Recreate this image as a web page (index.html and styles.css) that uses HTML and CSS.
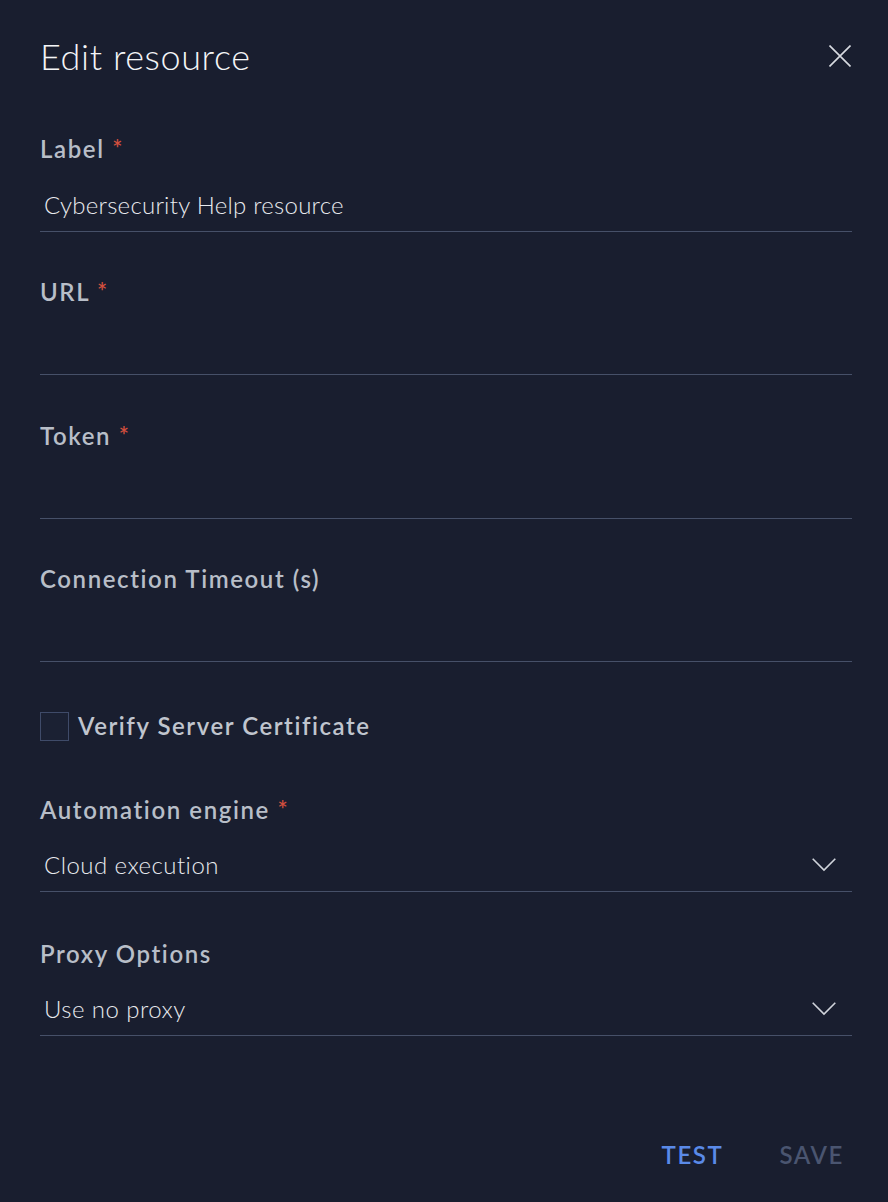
FILE: index.html
```html
<!DOCTYPE html>
<html lang="en">
<head>
<meta charset="utf-8">
<title>Edit resource</title>
<link rel="stylesheet" href="styles.css">
</head>
<body>
<div class="dialog">
  <header class="dialog-header">
    <h1 class="dialog-title">Edit resource</h1>
    <button class="close-btn" aria-label="Close">
      <svg width="22" height="22" viewBox="0 0 22 22"><path d="M0.5 0.5 L21.5 21.5 M21.5 0.5 L0.5 21.5" stroke="#d8dbe1" stroke-width="1.6" fill="none"/></svg>
    </button>
  </header>

  <form class="form">
    <div class="field">
      <div class="field-label">Label <span class="req">*</span></div>
      <div class="field-input">Cybersecurity Help resource</div>
    </div>
    <div class="field">
      <div class="field-label">URL <span class="req">*</span></div>
      <div class="field-input"></div>
    </div>
    <div class="field">
      <div class="field-label">Token <span class="req">*</span></div>
      <div class="field-input"></div>
    </div>
    <div class="field">
      <div class="field-label">Connection Timeout (s)</div>
      <div class="field-input"></div>
    </div>

    <label class="checkbox-row">
      <span class="checkbox"></span>
      <span class="checkbox-text">Verify Server Certificate</span>
    </label>

    <div class="field field-select">
      <div class="field-label">Automation engine <span class="req">*</span></div>
      <div class="field-input select">
        <span>Cloud execution</span>
        <svg class="chevron" width="24" height="14" viewBox="0 0 24 14"><path d="M0.7 0.7 L12 12 L23.3 0.7" stroke="#d0d4db" stroke-width="1.6" fill="none"/></svg>
      </div>
    </div>
    <div class="field field-select">
      <div class="field-label">Proxy Options</div>
      <div class="field-input select">
        <span>Use no proxy</span>
        <svg class="chevron" width="24" height="14" viewBox="0 0 24 14"><path d="M0.7 0.7 L12 12 L23.3 0.7" stroke="#d0d4db" stroke-width="1.6" fill="none"/></svg>
      </div>
    </div>
  </form>

  <footer class="dialog-footer">
    <button class="btn btn-test">TEST</button>
    <button class="btn btn-save">SAVE</button>
  </footer>
</div>
</body>
</html>
```

FILE: styles.css
```css
* { box-sizing: border-box; }

html, body {
  margin: 0;
  padding: 0;
  background: #191e2f;
}

body {
  font-family: Lato, "Liberation Sans", sans-serif;
  color: #e6e8ec;
}

.dialog {
  width: 888px;
  min-height: 1202px;
  padding: 36px 36px 0 40px;
}

.dialog-header {
  display: flex;
  justify-content: space-between;
  align-items: center;
  height: 40px;
}

.dialog-title {
  margin: 0;
  font-size: 36px;
  line-height: 40px;
  font-weight: 300;
  color: #f4f5f7;
  letter-spacing: 0.6px;
}

.close-btn {
  background: none;
  border: 0;
  padding: 0;
  width: 22px;
  height: 22px;
  margin-right: 1px;
  display: flex;
}

.form {
  display: flex;
  flex-direction: column;
  margin-top: 58px;
}

.field + .field {
  margin-top: 45.4px;
}

.field-label {
  font-size: 24px;
  line-height: 30px;
  font-weight: 600;
  color: #b8bec8;
  letter-spacing: 1.6px;
}

.req {
  color: #d24f3e;
  margin-left: 0;
  letter-spacing: 0;
}

.field-input {
  height: 68px;
  padding: 26px 0 11px 4px;
  font-size: 24px;
  line-height: 30px;
  font-weight: 300;
  letter-spacing: 0.25px;
  color: #e8eaee;
  border-bottom: 1px solid #465068;
}

.field-select .field-input {
  height: 67px;
  padding-top: 25px;
  padding-bottom: 11px;
  letter-spacing: 0.45px;
}

.field-select + .field-select {
  margin-top: 47px;
}

.select {
  display: flex;
  justify-content: space-between;
  align-items: center;
  padding-right: 16px;
}

.select .chevron {
  display: block;
}

.checkbox-row {
  display: flex;
  align-items: center;
  gap: 9px;
  height: 29px;
  margin-top: 49.6px;
  margin-bottom: 54px;
}

.checkbox {
  width: 29px;
  height: 29px;
  border: 1px solid #3f4b69;
  background: #1b2133;
}

.checkbox-text {
  font-size: 24px;
  line-height: 30px;
  font-weight: 600;
  letter-spacing: 1.55px;
  color: #c0c5ce;
}

.dialog-footer {
  display: flex;
  justify-content: flex-end;
  gap: 40px;
  margin-top: 104px;
}

.btn {
  background: none;
  border: 0;
  padding: 0 8px;
  font-family: Lato, "Liberation Sans", sans-serif;
  font-size: 24px;
  line-height: 30px;
  font-weight: 600;
  letter-spacing: 1.6px;
}

.btn-test { color: #5a8ae8; }
.btn-save { color: #4a5570; }
```
